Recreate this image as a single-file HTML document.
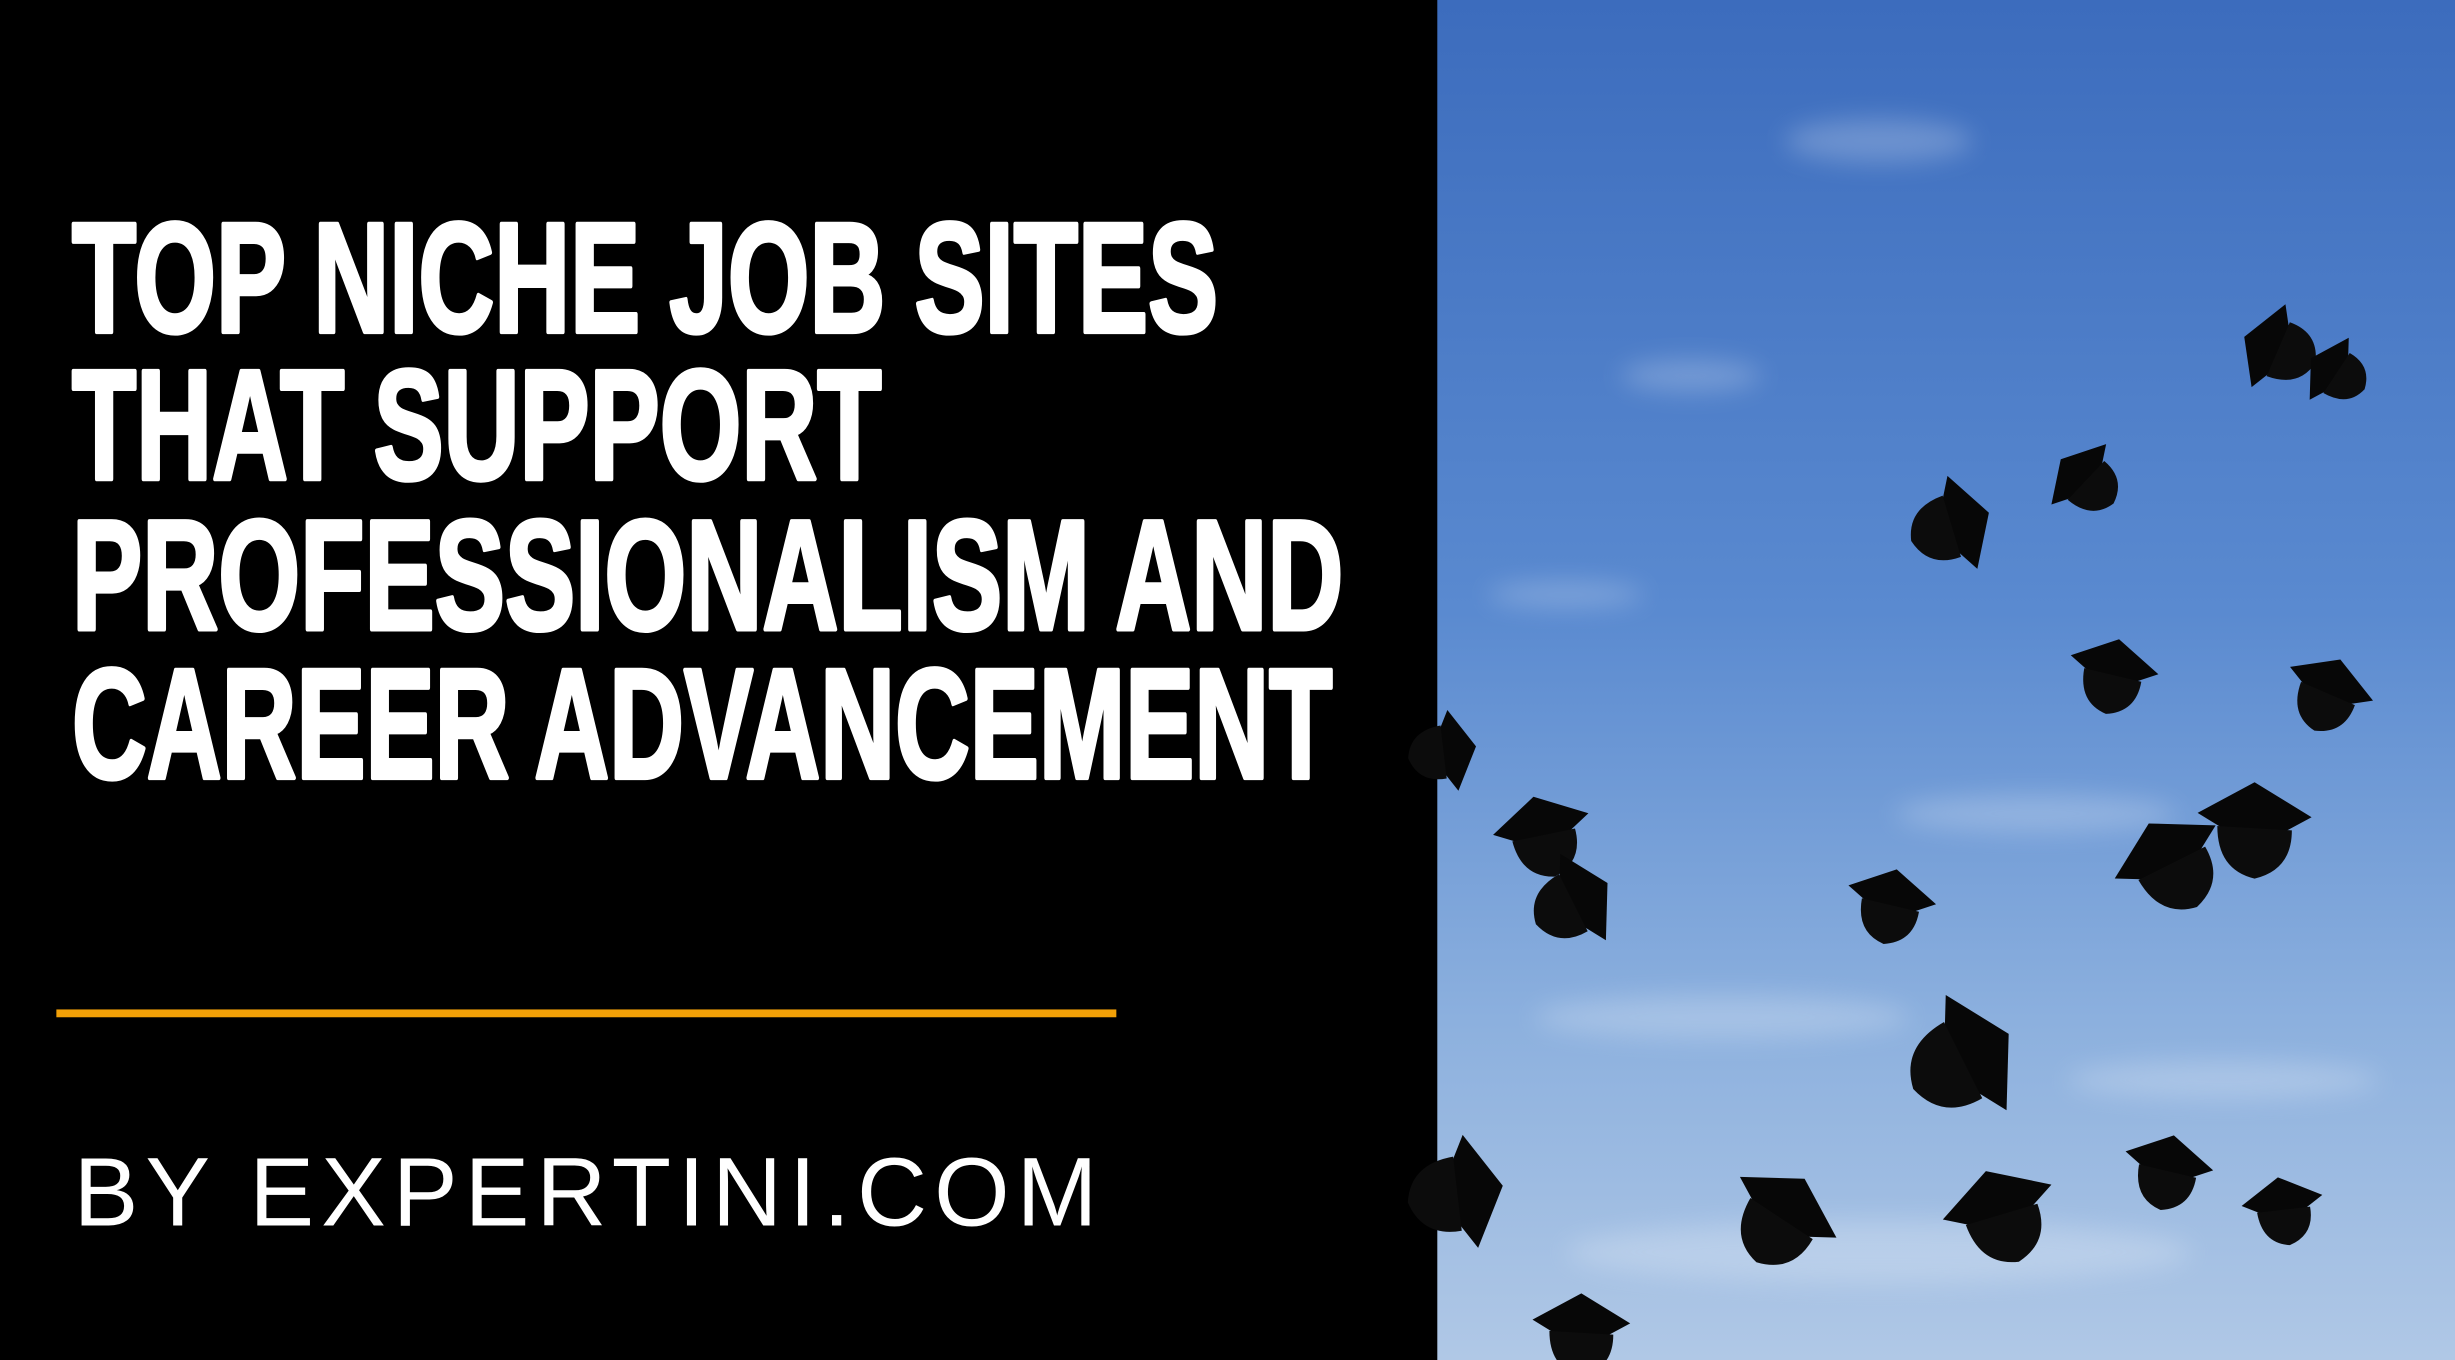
<!DOCTYPE html>
<html><head><meta charset="utf-8"><style>
html,body{margin:0;padding:0;background:#000;}
svg{display:block;}
</style></head><body>
<svg width="2455" height="1360" viewBox="0 0 1568 869" preserveAspectRatio="none" xmlns="http://www.w3.org/2000/svg">
<defs>
<linearGradient id="sky" x1="0" y1="0" x2="0" y2="1">
<stop offset="0" stop-color="#3c6cbd"/>
<stop offset="0.45" stop-color="#5a8ad0"/>
<stop offset="0.75" stop-color="#8cb0de"/>
<stop offset="1" stop-color="#b0c8e6"/>
</linearGradient>
<filter id="blur"><feGaussianBlur stdDeviation="8"/></filter>
<g id="cap"><polygon points="-26,-4 0,-18 26,-2 0,12" fill="#070707"/><path d="M-17,2 Q-17,22 0,26 Q17,22 17,4 Z" fill="#0c0c0c"/></g>
</defs>
<rect width="1568" height="869" fill="#000"/>
<rect x="918" y="0" width="650" height="869" fill="url(#sky)"/>
<g opacity="0.22" fill="#fff" filter="url(#blur)">
<ellipse cx="1200" cy="90" rx="60" ry="14"/><ellipse cx="1080" cy="240" rx="45" ry="10"/>
<ellipse cx="1000" cy="380" rx="50" ry="8"/><ellipse cx="1300" cy="520" rx="90" ry="12"/>
<ellipse cx="1100" cy="650" rx="120" ry="14"/><ellipse cx="1420" cy="690" rx="100" ry="12"/>
<ellipse cx="1200" cy="800" rx="200" ry="20"/>
</g>
<use href="#cap" transform="translate(1452,222) rotate(-70) scale(1.1)"/>
<use href="#cap" transform="translate(1490,237) rotate(-60) scale(0.9)"/>
<use href="#cap" transform="translate(1250,335) rotate(70) scale(1.2)"/>
<use href="#cap" transform="translate(1330,305) rotate(-50)"/>
<use href="#cap" transform="translate(1350,428) rotate(10) scale(1.1)"/>
<use href="#cap" transform="translate(1488,440) rotate(20) scale(1.1)"/>
<use href="#cap" transform="translate(1385,548) rotate(-30) scale(1.4)"/>
<use href="#cap" transform="translate(1440,525) rotate(0) scale(1.4)"/>
<use href="#cap" transform="translate(985,530) rotate(-15) scale(1.2)"/>
<use href="#cap" transform="translate(1008,575) rotate(60) scale(1.2)"/>
<use href="#cap" transform="translate(1208,575) rotate(10) scale(1.1)"/>
<use href="#cap" transform="translate(1258,675) rotate(60) scale(1.6)"/>
<use href="#cap" transform="translate(1140,775) rotate(30) scale(1.4)"/>
<use href="#cap" transform="translate(1277,772) rotate(-20) scale(1.4)"/>
<use href="#cap" transform="translate(1385,745) rotate(10) scale(1.1)"/>
<use href="#cap" transform="translate(1458,770) rotate(-10)"/>
<use href="#cap" transform="translate(935,762) rotate(80) scale(1.4)"/>
<use href="#cap" transform="translate(1010,848) rotate(0) scale(1.2)"/>
<use href="#cap" transform="translate(925,480) rotate(80)"/>
<g font-family="'Liberation Sans Narrow','Liberation Sans',sans-serif" font-weight="bold" fill="#fff" stroke="#fff" stroke-width="3" stroke-linejoin="round" font-size="100">
<text x="46" y="212" textLength="732" lengthAdjust="spacingAndGlyphs">TOP NICHE JOB SITES</text>
<text x="46" y="306" textLength="517" lengthAdjust="spacingAndGlyphs">THAT SUPPORT</text>
<text x="46" y="402" textLength="812" lengthAdjust="spacingAndGlyphs">PROFESSIONALISM AND</text>
<text x="46" y="497" textLength="805" lengthAdjust="spacingAndGlyphs">CAREER ADVANCEMENT</text>
</g>
<rect x="36" y="645" width="677" height="5" fill="#f2a007"/>
<text x="47" y="783" font-family="'Liberation Sans',sans-serif" font-size="62" fill="#fff" textLength="654" lengthAdjust="spacing">BY EXPERTINI.COM</text>
</svg>
</body></html>
